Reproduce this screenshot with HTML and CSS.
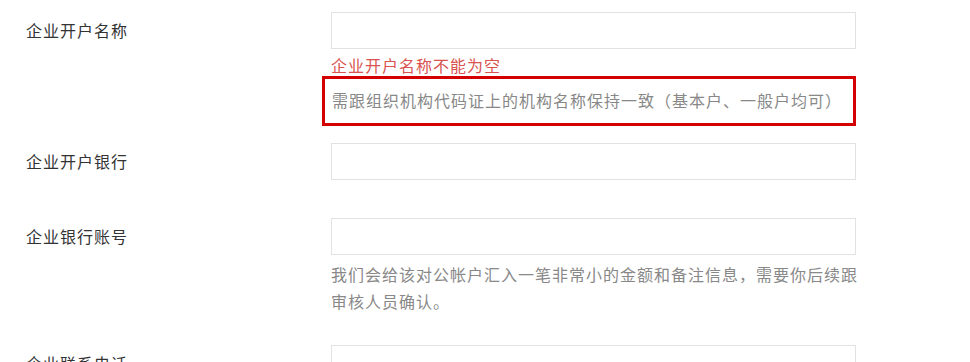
FILE: index.html
```html
<!DOCTYPE html>
<html lang="zh-CN">
<head>
  <meta charset="UTF-8">
  <title>企业账户信息</title>
  <link rel="stylesheet" href="styles.css">
</head>
<body>
  <form class="account-form">
    <div class="field field-first">
      <label class="field-label" for="accName">企业开户名称</label>
      <div class="field-body">
        <input type="text" id="accName" class="field-input">
        <div class="error-text">企业开户名称不能为空</div>
        <div class="hint-box">需跟组织机构代码证上的机构名称保持一致（基本户、一般户均可）</div>
      </div>
    </div>

    <div class="field field-tight">
      <label class="field-label" for="accBank">企业开户银行</label>
      <div class="field-body">
        <input type="text" id="accBank" class="field-input">
      </div>
    </div>

    <div class="field">
      <label class="field-label" for="accNo">企业银行账号</label>
      <div class="field-body">
        <input type="text" id="accNo" class="field-input">
        <div class="hint-text">我们会给该对公帐户汇入一笔非常小的金额和备注信息，需要你后续跟审核人员确认。</div>
      </div>
    </div>

    <div class="field field-last">
      <label class="field-label" for="contact">企业联系电话</label>
      <div class="field-body">
        <input type="text" id="contact" class="field-input">
      </div>
    </div>
  </form>
</body>
</html>
```

FILE: styles.css
```css
body, html {
  margin: 0;
  background: #fff;
  font-family: "Noto Sans CJK SC", "Liberation Sans", sans-serif;
  color: #333;
}

body {
  height: 362px;
  overflow: hidden;
}

.account-form {
  padding-left: 26px;
  width: 830px;
}

.field {
  display: grid;
  grid-template-columns: 305px 525px;
  margin-top: 38px;
}

.field-first {
  margin-top: 12px;
}

.field-tight {
  margin-top: 17px;
}

.field-last {
  margin-top: 30px;
}

.field-label {
  height: 37px;
  line-height: 37px;
  font-size: 16px;
  letter-spacing: 1px;
  color: #333;
}

.field-body {
  display: flex;
  flex-direction: column;
}

.field-input {
  box-sizing: border-box;
  width: 525px;
  height: 37px;
  margin: 0;
  border: 1px solid #e2e2e2;
  background: #fff;
  outline: none;
}

.error-text {
  margin-top: 6px;
  line-height: 20px;
  font-size: 16px;
  letter-spacing: 1px;
  color: #d9534f;
}

.hint-box {
  box-sizing: border-box;
  width: 534px;
  margin: 1px 0 0 -9px;
  padding: 8px 0 9px 7px;
  border: 3px solid #d40000;
  line-height: 27px;
  font-size: 16px;
  letter-spacing: 1px;
  color: #888;
  white-space: nowrap;
}

.hint-text {
  margin-top: 6px;
  width: 540px;
  line-height: 27px;
  font-size: 16px;
  letter-spacing: 1px;
  color: #888;
}
```
